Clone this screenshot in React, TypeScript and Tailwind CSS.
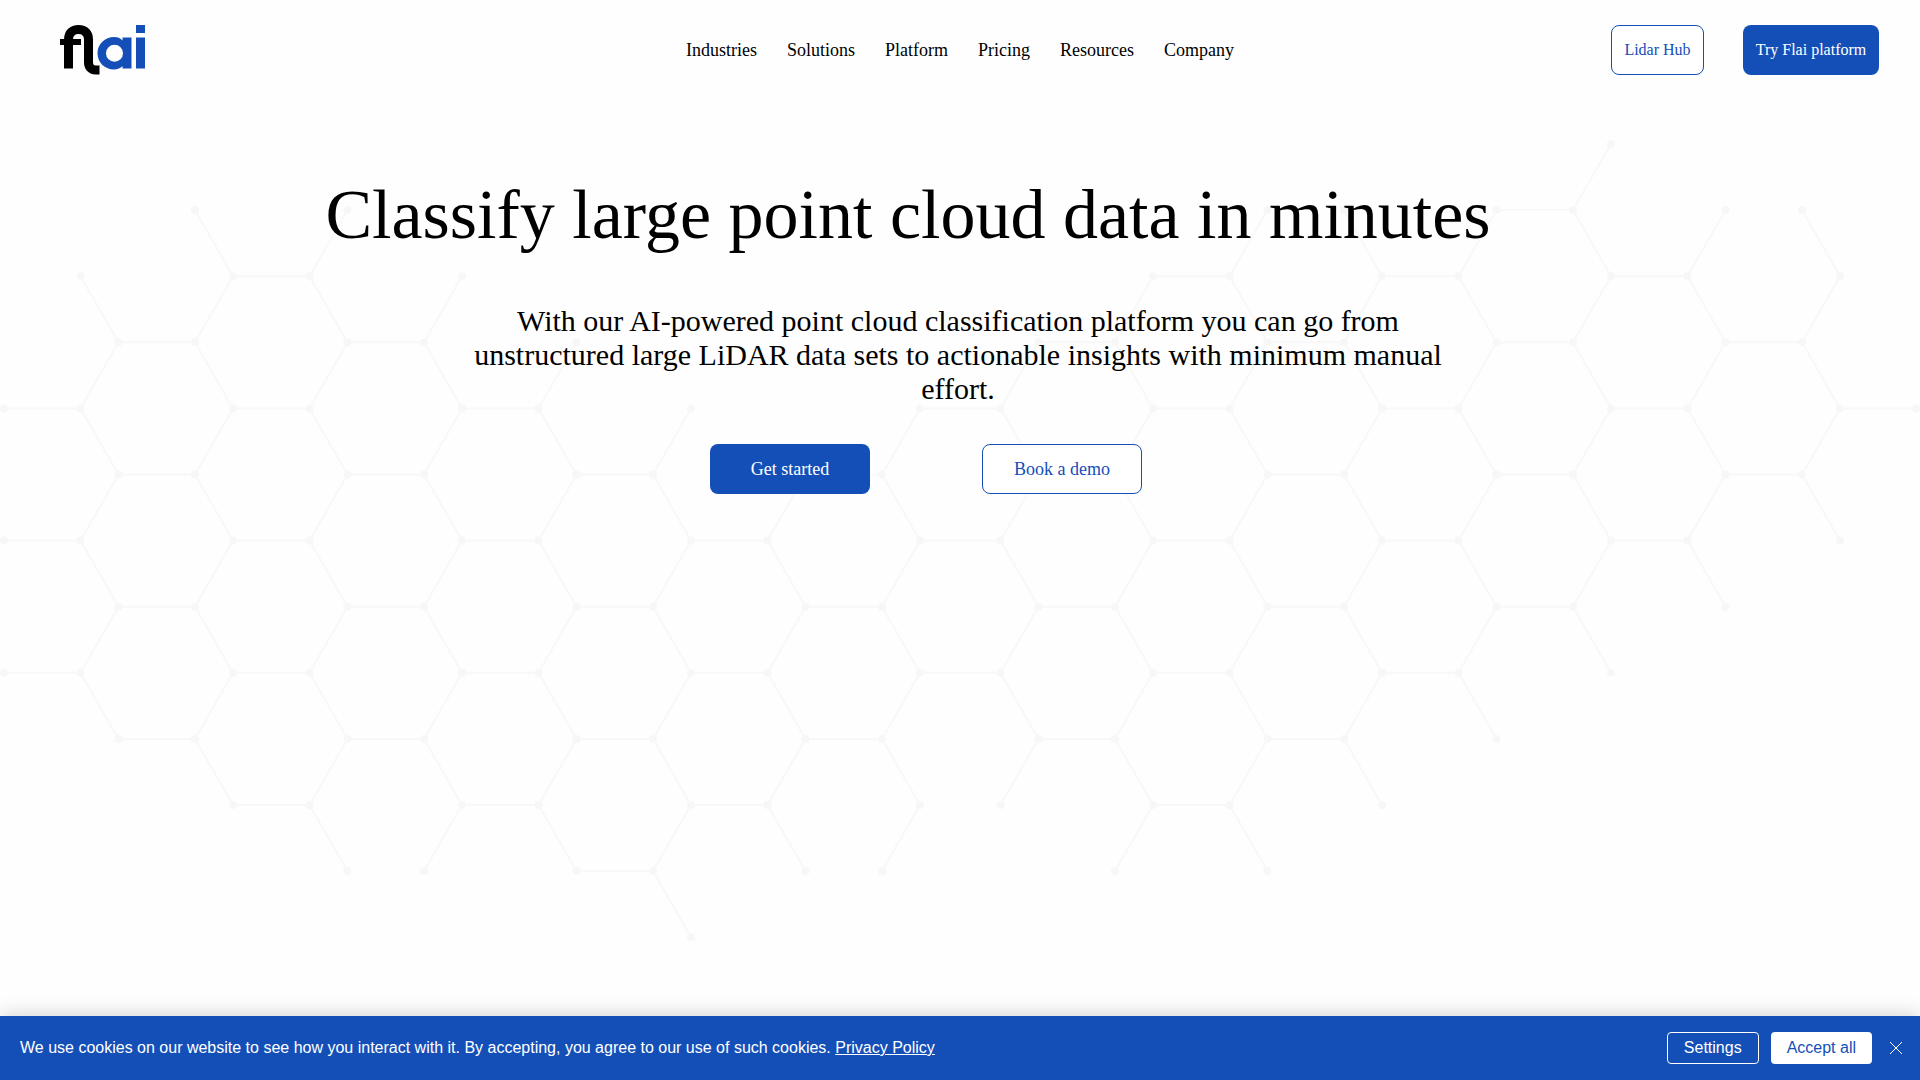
const NAV_ITEMS = ["Industries", "Solutions", "Platform", "Pricing", "Resources", "Company"];

// Lattice: column k holds a left and a right node; rows are spaced evenly.
const COL_STEP = 114.5;
const SPAN = 76.5;
const ROW_STEP = 66.1;
const CENTRE_GAP = 4;
const X0 = 4;
const Y0 = 144;

type Column = { bars: number[]; left?: number[]; right?: number[] };

const COLUMNS: Column[] = [
  { bars: [4, 6, 8], right: [2] },
  { bars: [3, 5, 7, 9], right: [1] },
  { bars: [2, 4, 6, 8, 10] },
  { bars: [3, 5, 7, 9], left: [1, 11], right: [11] },
  { bars: [4, 6, 8, 10], left: [2] },
  { bars: [5, 7, 9, 11], left: [3] },
  { bars: [6, 8, 10], left: [4, 12] },
  { bars: [5, 7, 9], left: [11], right: [11] },
  { bars: [4, 6, 8], left: [10], right: [10] },
  { bars: [3, 5, 7, 9], right: [11] },
  { bars: [2, 4, 6, 8, 10] },
  { bars: [3, 5, 7, 9], left: [1, 11], right: [1] },
  { bars: [2, 4, 6, 8], left: [10] },
  { bars: [1, 3, 5, 7], left: [9] },
  { bars: [2, 4, 6], left: [0, 8] },
  { bars: [3, 5], left: [1, 7], right: [1] },
  { bars: [4], left: [2, 6] },
];

const leftX = (k: number) => X0 + k * COL_STEP + (k > 8 ? CENTRE_GAP : 0);
const rightX = (k: number) => X0 + SPAN + k * COL_STEP + (k >= 8 ? CENTRE_GAP : 0);
const rowY = (r: number) => Y0 + r * ROW_STEP;

function HexLattice() {
  const lefts = COLUMNS.map((c) => [...c.bars, ...(c.left ?? [])]);
  const rights = COLUMNS.map((c) => [...c.bars, ...(c.right ?? [])]);
  let path = "";
  COLUMNS.forEach((c, k) => {
    c.bars.forEach((r) => {
      path += `M${leftX(k)} ${rowY(r)}H${rightX(k)}`;
    });
    rights[k].forEach((r) => {
      [r - 1, r + 1].forEach((n) => {
        if (lefts[k + 1]?.includes(n)) {
          path += `M${rightX(k)} ${rowY(r)}L${leftX(k + 1)} ${rowY(n)}`;
        }
      });
    });
  });
  return (
    <svg
      aria-hidden="true"
      viewBox="0 0 1920 1080"
      preserveAspectRatio="xMidYMin slice"
      className="pointer-events-none absolute inset-0 h-full w-full"
    >
      <path d={path} fill="none" stroke="#f8f8f8" strokeWidth="2" />
      <g fill="#f7f7f7">
        {lefts.map((rows, k) => rows.map((r) => <circle key={`l${k}-${r}`} cx={leftX(k)} cy={rowY(r)} r="4" />))}
        {rights.map((rows, k) => rows.map((r) => <circle key={`r${k}-${r}`} cx={rightX(k)} cy={rowY(r)} r="4" />))}
      </g>
    </svg>
  );
}

function Logo() {
  return (
    <svg viewBox="0 0 86 50" className="h-[50px] w-[86px]" role="img" aria-label="flai">
      <g fill="none" stroke="#000" strokeWidth="9">
        <path d="M8.5 43.500V14.500C8.500 8 12.500 4.500 18.500 4.500C25 4.500 28.500 8 28.500 14.500V37C28.500 42 31 45 35.500 45H39.500" />
      </g>
      <path d="M0 14H21V20H0Z" />
      <g fill="#144fb8">
        <path
          fillRule="evenodd"
          d="M54 12C45 12 37.500 19 37.500 28.200C37.500 37.500 45 44.500 54 44.500C57.500 44.500 60.500 43.200 62.500 41V43.500H71.500V12.500H62.500V15.400C60.500 13.200 57.500 12 54 12ZM54.500 19.700A8.500 8.500 0 1 1 54.500 36.700A8.500 8.500 0 1 1 54.500 19.700Z"
        />
        <path d="M76 12.500H85V43.500H76ZM76 0H85V8H76Z" />
      </g>
    </svg>
  );
}

export default function App() {
  return (
    <div className="relative flex min-h-screen flex-col overflow-hidden bg-[#fefefe] font-['Liberation_Serif',serif] text-black">
      <HexLattice />

      <header className="relative grid grid-cols-[1fr_auto_1fr] items-center px-[41px] py-[25px]">
        <a href="#home" className="ml-[19px] w-fit">
          <Logo />
        </a>
        <nav aria-label="Main" className="flex gap-[30px] text-lg">
          {NAV_ITEMS.map((item) => (
            <a key={item} href={`#${item.toLowerCase()}`}>
              {item}
            </a>
          ))}
        </nav>
        <div className="flex justify-end gap-[39px] text-base">
          <a
            href="#lidar-hub"
            className="flex h-[50px] w-[93px] items-center justify-center rounded-lg border border-[#144fb8] bg-white text-[#144fb8]"
          >
            Lidar Hub
          </a>
          <a
            href="#platform-login"
            className="flex h-[50px] w-[136px] items-center justify-center rounded-lg bg-[#144fb8] text-white"
          >
            Try Flai platform
          </a>
        </div>
      </header>

      <main className="relative flex flex-1 flex-col items-center pt-[73px]">
        <h1 className="mr-[104px] text-[70px] leading-[84px]">Classify large point cloud data in minutes</h1>
        <p className="mt-[47px] mr-1 w-[980px] max-w-full text-center text-[30px] leading-[34px]">
          With our AI-powered point cloud classification platform you can go from unstructured large LiDAR data sets to
          actionable insights with minimum manual effort.
        </p>
        <div className="mt-[38px] mr-[68px] flex gap-28 text-lg">
          <a
            href="#get-started"
            className="flex h-[50px] w-40 items-center justify-center rounded-lg bg-[#144fb8] text-white"
          >
            Get started
          </a>
          <a
            href="#book-a-demo"
            className="flex h-[50px] w-40 items-center justify-center rounded-lg border border-[#144fb8] bg-white text-[#144fb8]"
          >
            Book a demo
          </a>
        </div>
      </main>

      <section
        aria-label="Cookie consent"
        className="relative flex h-16 items-center justify-between bg-[#144fb8] pr-3 pl-5 font-['Liberation_Sans',sans-serif] text-base text-white shadow-[0_0_20px_rgba(0,0,0,0.2)]"
      >
        <p>
          We use cookies on our website to see how you interact with it. By accepting, you agree to our use of such
          cookies.{" "}
          <a href="#privacy" className="underline">
            Privacy Policy
          </a>
        </p>
        <div className="flex items-center gap-3">
          <button type="button" className="h-8 rounded border border-white px-4">
            Settings
          </button>
          <button type="button" className="h-8 rounded bg-white px-4 text-[#144fb8]">
            Accept all
          </button>
          <button type="button" aria-label="Close" className="flex h-8 w-6 items-center justify-center">
            <svg viewBox="0 0 12 12" className="h-3 w-3" stroke="#fff" strokeWidth="1">
              <path d="M0 0L12 12M12 0L0 12" />
            </svg>
          </button>
        </div>
      </section>
    </div>
  );
}
